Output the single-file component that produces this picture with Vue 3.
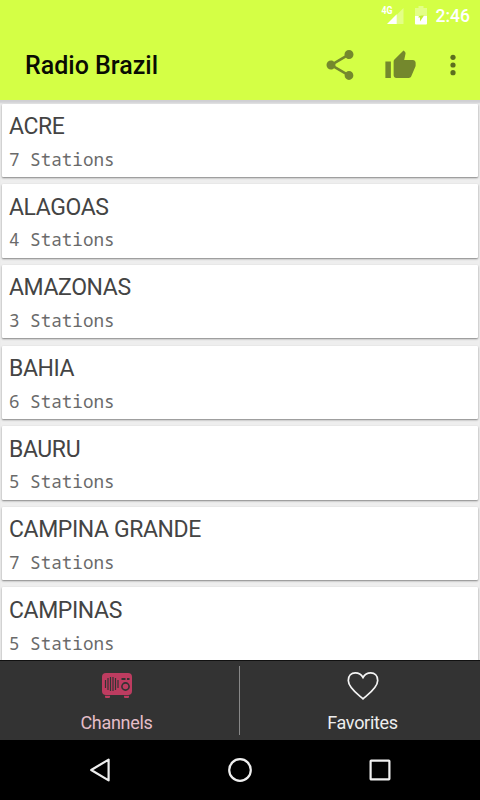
<script setup>
import { ref } from 'vue'

const channels = ref([
  { name: 'ACRE', stations: 7 },
  { name: 'ALAGOAS', stations: 4 },
  { name: 'AMAZONAS', stations: 3 },
  { name: 'BAHIA', stations: 6 },
  { name: 'BAURU', stations: 5 },
  { name: 'CAMPINA GRANDE', stations: 7 },
  { name: 'CAMPINAS', stations: 5 },
])

const activeTab = ref('channels')
</script>

<template>
  <div class="app">
    <header class="header">
      <div class="status-bar">
        <svg class="signal" width="24" height="24" viewBox="0 -4 24 24">
          <path d="M22.5 2v16h-16z" fill="#fff" fill-opacity="0.35" />
          <path d="M15.7 8.3v9.7h-9.7z" fill="#fff" />
          <text x="0.5" y="8" class="network" textLength="11" lengthAdjust="spacingAndGlyphs">4G</text>
        </svg>
        <svg class="battery" width="12" height="19" viewBox="0 0 12 19">
          <path d="M3.5 0h5v2H12v8H0V2h3.5z" fill="#fff" fill-opacity="0.35" />
          <path d="M0 10h12v7.5a1 1 0 0 1-1 1H1a1 1 0 0 1-1-1z" fill="#fff" />
          <path d="M6.8 9.5H9L5 15.5v-4H3.2L4 10z" fill="#c4ed35" />
        </svg>
        <span class="clock">2:46</span>
      </div>
      <div class="toolbar">
        <h1>Radio Brazil</h1>
        <button class="share">
          <svg width="36" height="36" viewBox="0 0 24 24">
            <path d="M18 16.08c-.76 0-1.44.3-1.96.77L8.91 12.7c.05-.23.09-.46.09-.7s-.04-.47-.09-.7l7.05-4.11c.54.5 1.25.81 2.04.81 1.66 0 3-1.34 3-3s-1.34-3-3-3-3 1.34-3 3c0 .24.04.47.09.7L8.04 9.81C7.5 9.31 6.79 9 6 9c-1.66 0-3 1.34-3 3s1.34 3 3 3c.79 0 1.5-.31 2.04-.81l7.12 4.16c-.05.21-.08.43-.08.65 0 1.61 1.31 2.92 2.92 2.92s2.92-1.31 2.92-2.92-1.31-2.92-2.92-2.92z" />
          </svg>
        </button>
        <button class="like">
          <svg width="33" height="33" viewBox="0 0 24 24">
            <path d="M1 21h4V9H1v12zm22-11c0-1.1-.9-2-2-2h-6.31l.95-4.57.03-.32c0-.41-.17-.79-.44-1.06L14.17 1 7.59 7.59C7.22 7.95 7 8.45 7 9v10c0 1.1.9 2 2 2h9c.83 0 1.54-.5 1.84-1.22l3.02-7.05c.09-.23.14-.47.14-.73v-2z" />
          </svg>
        </button>
        <button class="more">
          <svg width="6" height="22" viewBox="0 0 6 22">
            <circle cx="3" cy="3.3" r="2.6" />
            <circle cx="3" cy="11" r="2.6" />
            <circle cx="3" cy="18.7" r="2.6" />
          </svg>
        </button>
      </div>
    </header>

    <main class="list">
      <div v-for="channel in channels" :key="channel.name" class="card">
        <h2>{{ channel.name }}</h2>
        <p>{{ channel.stations }} Stations</p>
      </div>
    </main>

    <nav class="tabs">
      <button class="tab" :class="{ active: activeTab === 'channels' }" @click="activeTab = 'channels'">
        <svg width="32" height="28" viewBox="0 0 32 28">
          <rect x="1" y="1" width="30" height="22" rx="4" fill="#bd3c60" />
          <path d="M4 23.8h5v1.2a1 1 0 0 1-1 1H5a1 1 0 0 1-1-1zM23 23.8h5v1.2a1 1 0 0 1-1 1h-3a1 1 0 0 1-1-1z" fill="#bd3c60" />
          <path d="M4.5 8v8M7 6v12M9.5 5v14M12 5v14M14.5 6v12M17 8v8" class="grille" />
          <path d="M20.5 7h4M26 7h2.5" stroke="#333" stroke-width="1.8" />
          <circle cx="24.5" cy="14.5" r="3.6" fill="none" stroke="#333" stroke-width="1.6" />
        </svg>
        <span>Channels</span>
      </button>
      <button class="tab" :class="{ active: activeTab === 'favorites' }" @click="activeTab = 'favorites'">
        <svg width="32" height="28" viewBox="0 0 32 28">
          <path d="M16 26.8C11.5 22.8 1.3 15.9 1.3 8.4C1.3 3.8 4.3.9 8.3.9C11.9.9 14.4 2.7 16 5.5C17.6 2.7 20.1.9 23.7.9C27.7.9 30.7 3.8 30.7 8.4C30.7 15.9 20.5 22.8 16 26.8Z" fill="none" stroke="#f5f5f5" stroke-width="1.7" />
        </svg>
        <span>Favorites</span>
      </button>
    </nav>

    <footer class="system-bar">
      <svg width="24" height="26" viewBox="0 0 24 26">
        <path d="M20.6 2.6v20.8L3.2 13z" />
      </svg>
      <svg width="26" height="26" viewBox="0 0 26 26">
        <circle cx="13" cy="13" r="10.8" />
      </svg>
      <svg width="24" height="26" viewBox="0 0 24 26">
        <rect x="2.6" y="3.6" width="18.8" height="18.8" rx="0.6" />
      </svg>
    </footer>
  </div>
</template>

<style>
body {
  margin: 0;
  overflow: hidden;
}
</style>

<style scoped>
.app {
  display: flex;
  flex-direction: column;
  width: 480px;
  height: 800px;
  overflow: hidden;
  background: #eee;
  font-family: Roboto, sans-serif;
}

button {
  padding: 0;
  border: none;
  background: none;
  font: inherit;
  cursor: pointer;
}

svg {
  display: block;
}

.header {
  flex: none;
  height: 100px;
  background: #d4ff45;
}

.status-bar {
  display: flex;
  justify-content: flex-end;
  align-items: center;
  height: 32px;
  padding-right: 10px;
  color: #fff;
}

.signal {
  margin-top: -4px;
  margin-right: 10px;
}

.network {
  fill: #fff;
  font-size: 10.5px;
  font-weight: 700;
}

.battery {
  margin-top: -1px;
  margin-right: 9px;
}

.clock {
  font-size: 17.5px;
  font-weight: 500;
}

.toolbar {
  display: flex;
  align-items: center;
  height: 66px;
  padding: 0 24px 0 25px;
  fill: #74882d;
}

h1 {
  flex: 1;
  margin: 0;
  padding-top: 1px;
  color: #0a0c03;
  font-size: 25px;
  font-weight: 500;
}

.share {
  margin-right: 25.5px;
}

.like {
  margin-right: 33.5px;
}

.more {
  fill: #5c6f1f;
}

.list {
  display: flex;
  flex: 1;
  flex-direction: column;
  gap: 7.26px;
  min-height: 0;
  padding: 3.6px 2px 0;
  overflow: hidden;
  box-shadow: inset 0 4px 2px -1px #cfcfd2;
}

.card {
  flex: none;
  box-sizing: border-box;
  height: 73.4px;
  padding: 8.6px 7px 0;
  background: #fff;
  border-radius: 1px;
  box-shadow: 0 1px 2px rgba(0, 0, 0, 0.45);
}

h2 {
  margin: 0;
  color: #444;
  font-size: 23px;
  font-weight: 400;
  letter-spacing: -0.4px;
  line-height: 29px;
}

p {
  margin: 5.6px 0 0;
  color: #6a6a6a;
  font-family: "Droid Sans Mono", "Noto Mono", "Noto Sans Mono", "DejaVu Sans Mono", monospace;
  font-size: 17.6px;
  line-height: 24px;
}

.tabs {
  display: flex;
  flex: none;
  box-sizing: border-box;
  height: 80px;
  padding: 5px 0;
  border-top: 1px solid #111;
  background: #333;
}

.tab {
  display: flex;
  flex: 1;
  flex-direction: column;
  align-items: center;
  padding-top: 6px;
  padding-left: 5px;
  color: #eee;
  font-size: 18px;
  letter-spacing: -0.3px;
}

.tab:first-child {
  flex: 0 0 240px;
  box-sizing: border-box;
  padding-left: 0;
  padding-right: 6px;
  border-right: 1px solid #888;
}

.tab span {
  margin-top: 12px;
  line-height: 22px;
}

.tab.active {
  color: #e5bdc8;
}

.grille {
  stroke: #333;
  stroke-width: 1.2;
}

.system-bar {
  display: flex;
  flex: none;
  justify-content: space-between;
  align-items: center;
  height: 60px;
  padding: 0 88px;
  background: #000;
}

.system-bar svg {
  fill: none;
  stroke: #eee;
  stroke-width: 2.2;
  stroke-linejoin: round;
}
</style>
